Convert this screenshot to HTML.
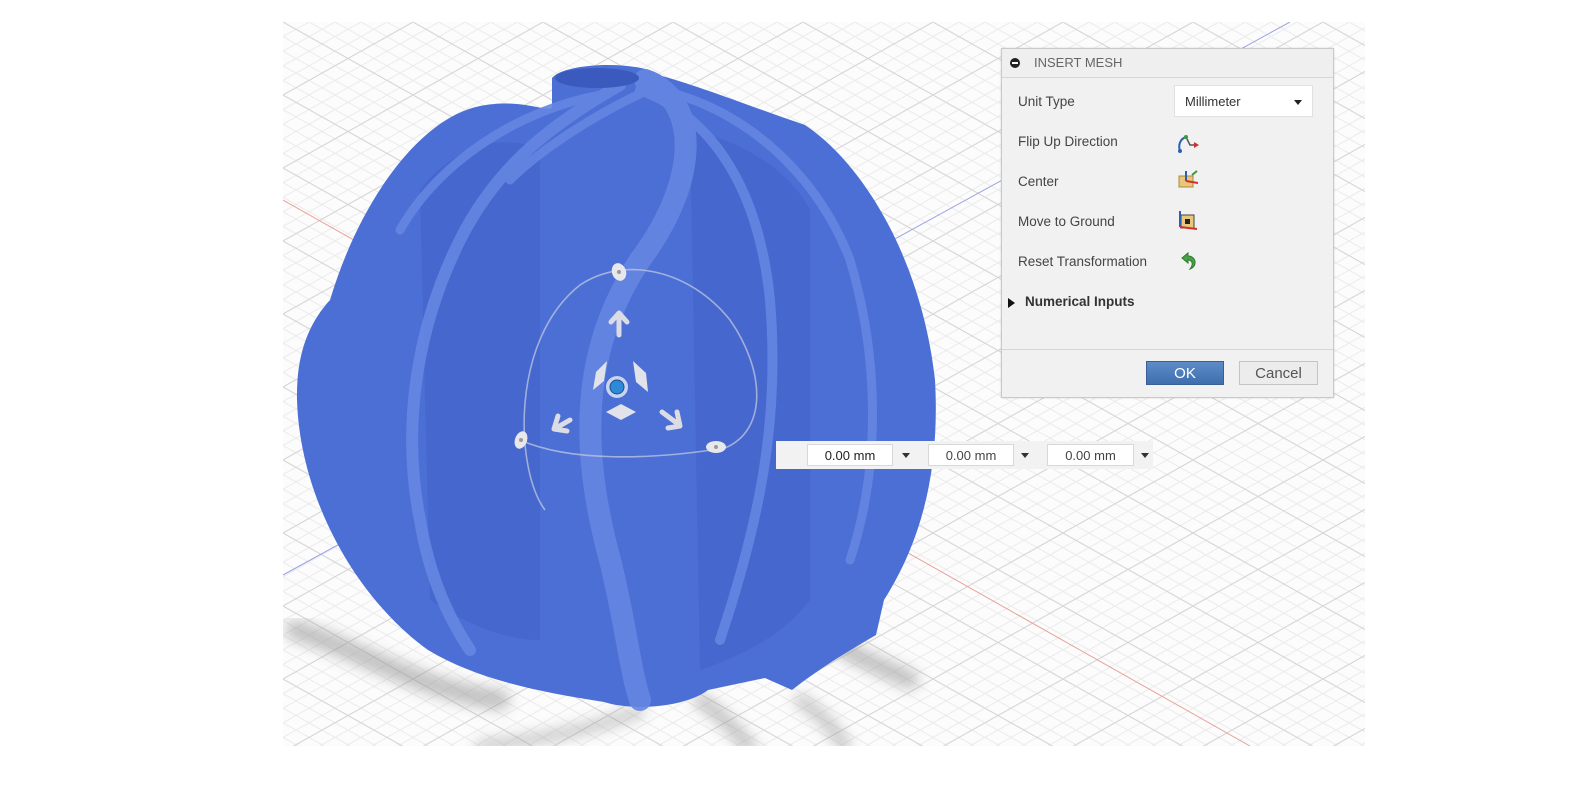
<!DOCTYPE html>
<html><head><meta charset="utf-8"><style>
body{margin:0;width:1580px;height:790px;background:#fff;position:relative;overflow:hidden;font-family:"Liberation Sans",sans-serif;}
#vp{position:absolute;left:283px;top:22px;width:1082px;height:724px;overflow:hidden;background:#fbfbfb}
.dlg{position:absolute;left:1001px;top:48px;width:331px;height:348px;background:#f1f1f1;border:1px solid #c9c9c9;box-shadow:0 0 2px rgba(0,0,0,.15)}
.hd{height:28px;border-bottom:1px solid #d6d6d6;background:#efefef;font-size:13px;color:#666;line-height:28px;padding-left:32px;position:relative}
.hd:before{content:"";position:absolute;left:8px;top:9px;width:10px;height:10px;border-radius:50%;background:#222}
.hd:after{content:"";position:absolute;left:10px;top:13px;width:6px;height:2px;background:#fff}
.lb{position:absolute;left:16px;font-size:13.5px;color:#444}
.sel{position:absolute;left:172px;top:36px;width:139px;height:32px;background:#fff;border:1px solid #e0e0e0;font-size:13px;color:#333;line-height:32px;padding-left:10px;box-sizing:border-box}
.sel:after{content:"";position:absolute;right:10px;top:14px;border:4px solid transparent;border-top:5px solid #222}
.ft{position:absolute;left:0;right:0;top:300px;border-top:1px solid #d6d6d6}
.btn{position:absolute;top:312px;height:24px;font-size:15px;line-height:24px;text-align:center;box-sizing:border-box}
.inp{position:absolute;top:444px;height:22px;background:#fff;border:1px solid #d8d8d8;font-size:13px;color:#444;line-height:22px;text-align:center;box-sizing:border-box}
.ar{position:absolute;top:453px;border:4px solid transparent;border-top:5px solid #333}
</style></head><body>
<div id="vp">
<svg width="1082" height="724" viewBox="283 22 1082 724" xmlns="http://www.w3.org/2000/svg">
<defs>
<pattern id="g1" patternUnits="userSpaceOnUse" x="283" y="22" width="26" height="14.6"><path d="M0 0L26 14.6M0 14.6L26 0" stroke="#ebebeb" stroke-width="1" fill="none"/></pattern>
<pattern id="g2" patternUnits="userSpaceOnUse" x="283" y="22" width="130" height="73"><path d="M0 0L130 73M0 73L130 0" stroke="#d6d6d6" stroke-width="1" fill="none"/></pattern>
<filter id="bl"><feGaussianBlur stdDeviation="7"/></filter>
</defs>
<rect x="283" y="22" width="1082" height="724" fill="#fcfcfc"/>
<rect x="283" y="22" width="1082" height="724" fill="url(#g1)"/>
<rect x="283" y="22" width="1082" height="724" fill="url(#g2)"/>
<line x1="283" y1="200" x2="1250" y2="746" stroke="#e8a098" stroke-width="1"/>
<line x1="283" y1="575" x2="1290" y2="22" stroke="#9aa3e4" stroke-width="1"/>
<g filter="url(#bl)" stroke="#999" fill="none" stroke-linecap="round" opacity=".6">
<path d="M295 630 C360 650 420 690 500 700" stroke-width="20"/>
<path d="M830 640 C860 660 890 670 910 680" stroke-width="18"/>
<path d="M700 700 C730 720 740 740 750 746" stroke-width="14"/>
<path d="M800 700 C830 720 840 740 845 746" stroke-width="12"/>
<path d="M640 712 C600 725 560 738 480 746" stroke-width="10"/>
</g>
<path d="M330 300 C360 200 420 118 480 106 C520 98 545 112 552 108 L552 78 C565 62 640 60 662 76 C705 88 760 110 805 125 C865 165 922 262 935 380 C940 470 922 540 884 600 L876 635 C850 650 820 668 792 690 L765 678 L708 690 C688 706 636 712 604 702 C540 692 478 680 428 650 C358 600 300 500 297 400 C296 352 310 322 330 300 Z" fill="#4c6fd6"/>
<g fill="#3f60c9" opacity=".55">
<path d="M420 190 C450 150 500 130 540 150 L540 640 C500 640 460 620 430 600 Z"/>
<path d="M690 130 C740 140 790 170 810 210 L810 600 C780 640 730 660 700 670 Z"/>
</g>
<g fill="none" stroke="#6686e2" stroke-linecap="round" opacity=".9">
<path d="M645 80 C700 100 700 180 640 260 C580 350 580 450 610 560 C625 620 630 670 640 700" stroke-width="22"/>
<path d="M620 85 C560 120 500 160 460 240 C420 320 400 420 420 520 C430 580 450 620 470 650" stroke-width="12"/>
<path d="M640 90 C720 120 760 200 770 300 C780 420 760 520 720 640" stroke-width="10"/>
<path d="M660 90 C750 110 820 180 850 260 C880 360 880 470 850 560" stroke-width="9"/>
<path d="M600 95 C520 110 440 160 400 230" stroke-width="9"/>
<path d="M660 85 C600 110 540 150 510 180" stroke-width="9"/>
</g>
<ellipse cx="597" cy="78" rx="42" ry="10" fill="#3a5abd"/>
<g>
<path d="M545 510 C515 470 510 340 580 285 C625 255 690 270 730 320 C765 370 768 430 725 448 C650 460 570 462 520 440" fill="none" stroke="#c8cde0" stroke-width="1.6" opacity=".7"/>
<ellipse cx="619" cy="272" rx="7" ry="9" fill="#e8e8ec" transform="rotate(-20 619 272)"/>
<ellipse cx="521" cy="440" rx="6" ry="9" fill="#e8e8ec" transform="rotate(20 521 440)"/>
<ellipse cx="716" cy="447" rx="10" ry="6" fill="#e8e8ec"/>
<circle cx="619" cy="272" r="2" fill="#999"/><circle cx="521" cy="440" r="2" fill="#999"/><circle cx="716" cy="447" r="2" fill="#999"/>
<g fill="none" stroke="#dcdde4" stroke-width="5" stroke-linecap="round" stroke-linejoin="round">
<path d="M619 335 L619 315 M611 322 L619 313 L627 322"/>
<path d="M570 420 L556 428 M558 416 L554 429 L567 431"/>
<path d="M662 412 L678 424 M677 412 L680 426 L668 428"/>
</g>
<path d="M596 372 L607 361 L604 381 L593 390 Z" fill="#e2e3ea"/>
<path d="M633 361 L646 373 L648 392 L636 382 Z" fill="#e2e3ea"/>
<path d="M606 412 L621 404 L636 412 L621 420 Z" fill="#e2e3ea"/>
<circle cx="617" cy="387" r="11" fill="#e9edf5" opacity=".8"/>
<circle cx="617" cy="387" r="7" fill="#2d8ad8" stroke="#1b4f8a" stroke-width="1"/>
</g>
</svg>
</div>
<div style="position:absolute;left:776px;top:441px;width:377px;height:28px;background:#f2f2f2"></div>
<div class="inp" style="left:807px;width:86px;color:#222">0.00 mm</div><div class="ar" style="left:902px"></div>
<div class="inp" style="left:928px;width:86px">0.00 mm</div><div class="ar" style="left:1021px"></div>
<div class="inp" style="left:1047px;width:87px">0.00 mm</div><div class="ar" style="left:1141px"></div>
<div class="dlg">
<div class="hd">INSERT MESH</div>
<div class="lb" style="top:45px">Unit Type</div>
<div class="sel">Millimeter</div>
<div class="lb" style="top:85px">Flip Up Direction</div>
<div class="lb" style="top:125px">Center</div>
<div class="lb" style="top:165px">Move to Ground</div>
<div class="lb" style="top:205px">Reset Transformation</div>
<svg style="position:absolute;left:172px;top:82px" width="30" height="200">
<path d="M12 6 C6 8 4 14 6 20" stroke="#2a5fb8" stroke-width="2" fill="none"/><path d="M12 6 L16 14 L22 14" stroke="#555" stroke-width="1.5" fill="none"/><path d="M20 11 L25 14 L20 17Z" fill="#d03030"/><circle cx="12" cy="6" r="2" fill="#3a9a3a"/><circle cx="6" cy="20" r="2" fill="#2a5fb8"/>
<rect x="5" y="45" width="14" height="11" fill="#e8c878" stroke="#a88a40"/><path d="M12 50 L12 40" stroke="#2a5fb8" stroke-width="2"/><path d="M12 50 L24 52" stroke="#d03030" stroke-width="2"/><path d="M18 44 L23 40" stroke="#3a9a3a" stroke-width="2"/>
<rect x="7" y="84" width="13" height="13" fill="#e8c878" stroke="#444"/><rect x="11" y="88" width="5" height="5" fill="#222"/><path d="M6 96 L6 80" stroke="#2a5fb8" stroke-width="2"/><path d="M6 96 L23 98" stroke="#d03030" stroke-width="2"/>
<path d="M8 127 L14 122 L14 125 C22 125 24 135 16 138 C20 133 18 129 14 129 L14 132 Z" fill="#4aa04a" stroke="#2e7a2e"/>
</svg>
<div style="position:absolute;left:6px;top:249px;border:5px solid transparent;border-left:7px solid #111"></div>
<div class="lb" style="left:23px;top:245px;font-weight:bold;color:#333">Numerical Inputs</div>
<div class="ft"></div>
<div class="btn" style="left:144px;width:78px;background:linear-gradient(#5d8cc8,#3f6eae);color:#fff;border:1px solid #3a5f96">OK</div>
<div class="btn" style="left:237px;width:79px;background:#ececec;color:#555;border:1px solid #c4c4c4">Cancel</div>
</div>
</body></html>
